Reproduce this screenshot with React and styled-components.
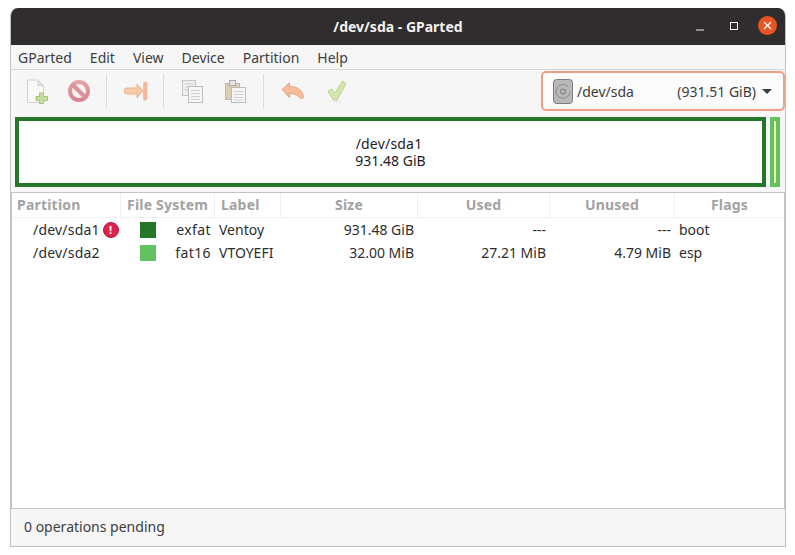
import React from 'react';
import styled, { createGlobalStyle } from 'styled-components';

const GlobalStyle = createGlobalStyle`
  html, body {
    margin: 0;
    padding: 0;
    background: #fff;
  }
  body {
    font-family: "Noto Sans", "Open Sans", sans-serif;
    font-size: 14px;
  }
`;

const COLUMNS = '109px 94px 66px 137px 132px 125px 1fr';

const Page = styled.div`
  width: 795px;
  height: 555px;
  padding: 8px 9px 8px 10px;
  box-sizing: border-box;
`;

const Window = styled.div`
  height: 538px;
  display: flex;
  flex-direction: column;
  background: #f6f6f6;
  border: 1px solid #c2c2c2;
  border-top: 0;
  border-radius: 8px 8px 0 0;
  overflow: hidden;
`;

const TitleBar = styled.header`
  position: relative;
  flex: 0 0 37px;
  display: flex;
  align-items: center;
  justify-content: center;
  background: #2f2d2d;
  color: #f4f2f0;
  font-weight: 700;
  font-size: 14px;
`;

const WindowButtons = styled.div`
  position: absolute;
  right: 8px;
  top: 8px;
  display: flex;
  align-items: center;
  gap: 15px;
`;

const WinButton = styled.span`
  width: 19px;
  height: 19px;
  display: flex;
  align-items: center;
  justify-content: center;
  border-radius: 50%;
  background: ${p => (p.$close ? '#e95420' : 'transparent')};
`;

const MenuBar = styled.nav`
  flex: 0 0 24px;
  display: flex;
  align-items: center;
  gap: 18px;
  padding-left: 7px;
  color: #3d3d3d;
  border-bottom: 1px solid #d8d8d8;
`;

const Toolbar = styled.div`
  flex: 0 0 42px;
  display: flex;
  align-items: center;
  padding: 0 0 2px 12px;
`;

const ToolIcon = styled.span`
  width: 27px;
  height: 27px;
  display: flex;
  align-items: center;
  justify-content: center;
  margin-right: ${p => p.$gap}px;
`;

const ToolSep = styled.span`
  width: 1px;
  height: 34px;
  background: #dcdcdc;
  margin-right: ${p => p.$gap}px;
`;

const DeviceCombo = styled.div`
  margin-left: auto;
  width: 244px;
  height: 40px;
  box-sizing: border-box;
  display: flex;
  align-items: center;
  padding: 0 11px 0 10px;
  background: #fbfbfb;
  border: 2px solid #ee9e85;
  border-radius: 5px;
  color: #3d3d3d;
`;

const DeviceName = styled.span`
  margin-left: 4px;
  flex: 1;
`;

const Caret = styled.span`
  width: 0;
  height: 0;
  margin-left: 6px;
  border-left: 5px solid transparent;
  border-right: 5px solid transparent;
  border-top: 5px solid #3d3d3d;
`;

const DiskGraph = styled.div`
  flex: 0 0 70px;
  display: flex;
  gap: 4px;
  padding: 0 5px 0 4px;
  margin-top: 3px;
`;

const PartBox = styled.div`
  flex: ${p => (p.$grow ? 1 : '0 0 10px')};
  display: flex;
  flex-direction: column;
  align-items: center;
  justify-content: center;
  box-sizing: border-box;
  padding-bottom: 1px;
  border: 4px solid ${p => (p.$grow ? '#26762a' : '#62c162')};
  background: ${p => (p.$grow ? '#fff' : '#f3f39b')};
  color: #1c1c1c;
  line-height: 17px;
`;

const PartName = styled.span`
  letter-spacing: 0.2px;
  margin-right: 3px;
`;

const TableArea = styled.section`
  flex: 1;
  margin-top: 5px;
  background: #fff;
  border-top: 1px solid #c4c4c4;
  border-left: 1px solid #c4c4c4;
  border-right: 1px solid #c4c4c4;
`;

const HeaderRow = styled.div`
  display: grid;
  grid-template-columns: ${COLUMNS};
  height: 24px;
  border-bottom: 1px solid #f0f0f0;
`;

const HeaderCell = styled.div`
  display: flex;
  align-items: center;
  justify-content: ${p => (p.$left ? 'flex-start' : 'center')};
  padding: 0 0 1px ${p => (p.$left ? '6px' : '0')};
  box-sizing: border-box;
  color: #a2a2a2;
  font-weight: 700;
  font-size: 14px;
  letter-spacing: 0.2px;
  border-right: ${p => (p.$last ? 0 : '1px solid #f0f0f0')};

  &:first-child {
    padding-left: 5px;
  }
`;

const Row = styled.div`
  display: grid;
  grid-template-columns: ${COLUMNS};
  height: 23px;
  align-items: center;
  color: #2d2d2d;
`;

const Cell = styled.div`
  display: flex;
  align-items: center;
  justify-content: ${p => (p.$right ? 'flex-end' : 'flex-start')};
  padding: ${p => (p.$right ? '0 4px 0 0' : '0 0 0 4px')};
  white-space: nowrap;
`;

const NameCell = styled(Cell)`
  padding-left: 21px;
  letter-spacing: 0.2px;
`;

const FsCell = styled(Cell)`
  padding: 0 4px 0 0;
  justify-content: space-between;
  letter-spacing: 0.4px;
`;

const Swatch = styled.span`
  width: 16px;
  height: 16px;
  margin-left: 19px;
  background: ${p => p.$color};
`;

const AlertDot = styled.span`
  width: 16px;
  height: 16px;
  flex: none;
  margin-left: 3px;
  border-radius: 50%;
  background: #e0234a;
  border: 1px solid #a81b3a;
  box-sizing: border-box;
  color: #fff;
  font-size: 11px;
  font-weight: 700;
  line-height: 14px;
  text-align: center;
`;

const StatusBar = styled.footer`
  flex: 0 0 38px;
  box-sizing: border-box;
  display: flex;
  align-items: center;
  padding: 0 0 2px 13px;
  border-top: 1px solid #c4c4c4;
  color: #3d3d3d;
`;

const NewIcon = () => (
  <svg width="22" height="25" viewBox="0 0 22 25">
    <path d="M1.500 1h10.500l5.500 5.500v17h-16z" fill="#f8f8f8" stroke="#d2d2d2" />
    <path d="M12 1v5.500h5.500z" fill="#dedede" stroke="#d2d2d2" />
    <path d="M13.500 14h4v3.500h4v4h-4v3h-4v-3h-3.500v-4h3.500z" fill="#c4dc9c" stroke="#a9c07f" />
  </svg>
);

const DeleteIcon = () => (
  <svg width="24" height="24" viewBox="0 0 24 24">
    <defs>
      <linearGradient id="deleteRing" x1="0" y1="0" x2="0" y2="1">
        <stop offset="0" stopColor="#e6a2a6" />
        <stop offset="1" stopColor="#d5838c" />
      </linearGradient>
    </defs>
    <circle cx="12" cy="12" r="9" fill="#f9f1f0" stroke="url(#deleteRing)" strokeWidth="4" />
    <path d="M5.500 5.500l13 13" stroke="#dc9398" strokeWidth="4" />
  </svg>
);

const ResizeIcon = () => (
  <svg width="24" height="20" viewBox="0 0 24 20">
    <path d="M3 7h10V3l6 7-6 7v-4H3a3 3 0 0 1 0-6z" fill="#f5c9a9" stroke="#edb48f" strokeLinejoin="round" />
    <rect x="19.500" y="1" width="3.500" height="18" rx="1.500" fill="#f3b99a" stroke="#ecb18b" strokeWidth="0.600" />
  </svg>
);

const CopyIcon = () => (
  <svg width="21" height="23" viewBox="0 0 21 23">
    <rect x="0.500" y="0.500" width="13" height="15" fill="#eee" stroke="#c6c6c6" />
    <path d="M3 4h8M3 7h8M3 10h8" stroke="#cfcfcf" />
    <rect x="6.500" y="6.500" width="14" height="16" fill="#f7f7f7" stroke="#bcbcbc" />
    <path d="M9 10.500h9M9 13.500h9M9 16.500h9M9 19.500h9" stroke="#cfcfcf" />
  </svg>
);

const PasteIcon = () => (
  <svg width="21" height="23" viewBox="0 0 21 23">
    <rect x="0.500" y="3.500" width="14" height="16" fill="#dccdb6" stroke="#c8b89f" />
    <rect x="4.500" y="0.500" width="6" height="5" fill="#e6e6e6" stroke="#a8a8a8" />
    <rect x="6.500" y="7.500" width="14" height="15" fill="#f7f7f7" stroke="#bcbcbc" />
    <path d="M9 11.500h9M9 14.500h9M9 17.500h9M9 20h9" stroke="#cfcfcf" />
  </svg>
);

const UndoIcon = () => (
  <svg width="24" height="18" viewBox="0 0 24 18">
    <path d="M1 7.500L8.500 1v3.500c7.500 0 12.500 3 14 10 .3 2-2 2.800-3.500 1.300C16.500 13 13 11.500 8.500 11.500V15.500z" fill="#f5bd9b" stroke="#ec9f7c" strokeLinejoin="round" />
  </svg>
);

const ApplyIcon = () => (
  <svg width="20" height="23" viewBox="0 0 20 23">
    <path d="M1 11.500l3.500-2.500 3.500 4.500L15.500 1l3.500 2.500-9 16.500h-3.500z" fill="#d5e5ad" stroke="#b9d08c" strokeLinejoin="round" />
    <ellipse cx="9" cy="21.500" rx="5" ry="1" fill="#e8e8e8" />
  </svg>
);

const DiskIcon = () => (
  <svg width="20" height="25" viewBox="0 0 20 25">
    <rect x="0.500" y="0.500" width="19" height="24" rx="3" fill="#b8b8b8" stroke="#7c7c7c" />
    <path d="M15 7.500a7 7 0 1 0 2 5" fill="none" stroke="#8c8c8c" />
    <circle cx="10" cy="12.500" r="2.500" fill="none" stroke="#777" />
  </svg>
);

const MENUS = ['GParted', 'Edit', 'View', 'Device', 'Partition', 'Help'];
const HEADERS = [
  { name: 'Partition', left: true },
  { name: 'File System', left: true },
  { name: 'Label', left: true },
  { name: 'Size' },
  { name: 'Used' },
  { name: 'Unused' },
  { name: 'Flags', last: true },
];
const ROWS = [
  { name: '/dev/sda1', alert: true, color: '#26762a', fs: 'exfat', label: 'Ventoy', size: '931.48 GiB', used: '---', unused: '---', flags: 'boot' },
  { name: '/dev/sda2', color: '#62c162', fs: 'fat16', label: 'VTOYEFI', size: '32.00 MiB', used: '27.21 MiB', unused: '4.79 MiB', flags: 'esp' },
];

export default function App() {
  return (
    <Page>
      <GlobalStyle />
      <Window>
        <TitleBar>
          /dev/sda - GParted
          <WindowButtons>
            <WinButton>
              <svg width="12" height="12" viewBox="0 0 12 12"><path d="M2 10h8" stroke="#f4f2f0" strokeWidth="1" /></svg>
            </WinButton>
            <WinButton>
              <svg width="10" height="10" viewBox="0 0 10 10"><rect x="1.500" y="1.500" width="7" height="7" fill="none" stroke="#f4f2f0" /></svg>
            </WinButton>
            <WinButton $close>
              <svg width="9" height="9" viewBox="0 0 9 9"><path d="M1 1l7 7M8 1L1 8" stroke="#fff" strokeWidth="1.300" /></svg>
            </WinButton>
          </WindowButtons>
        </TitleBar>
        <MenuBar>
          {MENUS.map(m => <span key={m}>{m}</span>)}
        </MenuBar>
        <Toolbar>
          <ToolIcon $gap={15}><NewIcon /></ToolIcon>
          <ToolIcon $gap={14}><DeleteIcon /></ToolIcon>
          <ToolSep $gap={15} />
          <ToolIcon $gap={14}><ResizeIcon /></ToolIcon>
          <ToolSep $gap={15} />
          <ToolIcon $gap={16}><CopyIcon /></ToolIcon>
          <ToolIcon $gap={14}><PasteIcon /></ToolIcon>
          <ToolSep $gap={15} />
          <ToolIcon $gap={17}><UndoIcon /></ToolIcon>
          <ToolIcon $gap={0}><ApplyIcon /></ToolIcon>
          <DeviceCombo>
            <DiskIcon />
            <DeviceName>/dev/sda</DeviceName>
            <span>(931.51 GiB)</span>
            <Caret />
          </DeviceCombo>
        </Toolbar>
        <DiskGraph>
          <PartBox $grow>
            <PartName>/dev/sda1</PartName>
            <span>931.48 GiB</span>
          </PartBox>
          <PartBox />
        </DiskGraph>
        <TableArea>
          <HeaderRow>
            {HEADERS.map(h => (
              <HeaderCell key={h.name} $left={h.left} $last={h.last}>{h.name}</HeaderCell>
            ))}
          </HeaderRow>
          {ROWS.map(r => (
            <Row key={r.name}>
              <NameCell>
                {r.name}
                {r.alert && <AlertDot>!</AlertDot>}
              </NameCell>
              <FsCell><Swatch $color={r.color} />{r.fs}</FsCell>
              <Cell>{r.label}</Cell>
              <Cell $right>{r.size}</Cell>
              <Cell $right>{r.used}</Cell>
              <Cell $right>{r.unused}</Cell>
              <Cell>{r.flags}</Cell>
            </Row>
          ))}
        </TableArea>
        <StatusBar>0 operations pending</StatusBar>
      </Window>
    </Page>
  );
}
